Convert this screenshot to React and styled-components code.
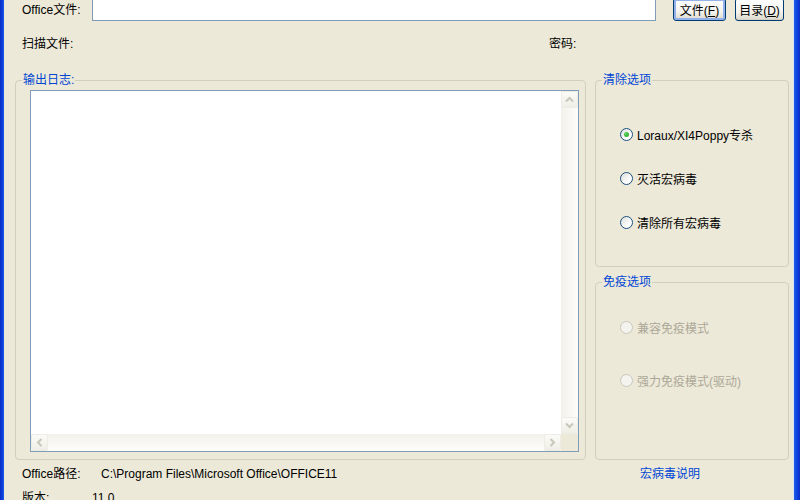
import React from 'react';
import styled, { createGlobalStyle } from 'styled-components';

const GlobalStyle = createGlobalStyle`
  html, body {
    margin: 0;
    padding: 0;
    background: #ece9d8;
    overflow: hidden;
  }
  body {
    font-family: "Liberation Sans", "Noto Sans CJK SC", sans-serif;
    font-size: 12px;
    color: #000;
  }
`;

const Window = styled.div`
  display: flex;
  width: 800px;
  height: 500px;
  overflow: hidden;
`;

const LeftFrame = styled.div`
  width: 4px;
  flex-shrink: 0;
  background: linear-gradient(to right, #0a2fc4, #0b3ad9 50%, #1c5ce8);
`;

const RightFrame = styled.div`
  width: 8px;
  flex-shrink: 0;
  background: linear-gradient(to right, #d9e3f5 0, #d9e3f5 1px, #1d5fe6 1px, #0b3ad9 5px, #062ab8);
`;

const Client = styled.div`
  flex: 1;
  display: flex;
  flex-direction: column;
  background: #ece9d8;
  padding: 0 4px 0 11px;
`;

const Row = styled.div`
  display: flex;
  align-items: center;
  flex-shrink: 0;
  height: ${p => p.h || 16}px;
  margin-top: ${p => p.mt || 0}px;
  padding-left: 7px;
`;

const Label = styled.span`
  width: ${p => (p.w ? `${p.w}px` : 'auto')};
  flex-shrink: 0;
  white-space: nowrap;
  line-height: 16px;
  color: ${p => (p.link ? '#0046d5' : '#000')};
`;

const TextInput = styled.div`
  width: 564px;
  height: 100%;
  box-sizing: border-box;
  background: #fff;
  border: 1px solid #7f9db9;
`;

const Button = styled.button`
  height: 100%;
  width: ${p => p.w}px;
  margin-left: ${p => p.ml}px;
  box-sizing: border-box;
  padding: 0 0 2px;
  font: inherit;
  color: #000;
  border: 1px solid #003c74;
  border-radius: 3px;
  background: linear-gradient(to bottom, #fff, #f4f3ee 60%, #dcd9cb);
  box-shadow: ${p => (p.primary ? 'inset 0 0 0 2px #93b2ea' : 'inset 0 -1px 0 #d6d0c5')};
  display: flex;
  align-items: flex-end;
  justify-content: center;
`;

const Main = styled.div`
  display: flex;
  flex-shrink: 0;
  height: 387px;
  margin-top: 21px;
  gap: 9px;
`;

const Group = styled.fieldset`
  margin: 0;
  box-sizing: border-box;
  width: ${p => p.w}px;
  height: ${p => p.h}px;
  border: 1px solid #d0d0bf;
  border-radius: 4px;
  padding: ${p => p.pad};
  min-width: 0;
`;

const Legend = styled.legend`
  padding: 0 1px;
  color: #0046d5;
  line-height: 14px;
`;

const Column = styled.div`
  display: flex;
  flex-direction: column;
  gap: 8px;
`;

const LogBox = styled.div`
  margin-left: 8px;
  height: 362px;
  box-sizing: border-box;
  border: 1px solid #7f9db9;
  display: grid;
  grid-template-columns: 1fr 17px;
  grid-template-rows: 1fr 17px;
  background: #fff;
`;

const LogText = styled.div`
  background: #fff;
`;

const ScrollBar = styled.div`
  display: flex;
  flex-direction: ${p => (p.vertical ? 'column' : 'row')};
  background: ${p =>
    p.vertical
      ? 'linear-gradient(to right, #f3f1ea, #fdfdfb)'
      : 'linear-gradient(to bottom, #f3f1ea, #fdfdfb)'};
`;

const Track = styled.div`
  flex: 1;
`;

const ArrowButton = styled.div`
  width: 17px;
  height: 17px;
  box-sizing: border-box;
  border: 1px solid #eeede5;
  border-radius: 2px;
  background: linear-gradient(to bottom, #fbfbf8, #efeee6);
  display: flex;
  align-items: center;
  justify-content: center;
`;

const Corner = styled.div`
  background: #ece9d8;
`;

const RadioList = styled.div`
  display: flex;
  flex-direction: column;
  gap: ${p => p.gap}px;
  margin-top: ${p => p.mt}px;
  margin-left: 18px;
`;

const RadioRow = styled.label`
  display: flex;
  align-items: center;
  height: 20px;
  gap: 4px;
  color: ${p => (p.disabled ? '#aca899' : '#000')};
`;

const RadioCircle = styled.span`
  width: 13px;
  height: 13px;
  box-sizing: border-box;
  border-radius: 50%;
  border: 1px solid ${p => (p.disabled ? '#cac8bb' : '#1c5180')};
  background: ${p =>
    p.disabled ? '#f4f3ee' : 'linear-gradient(135deg, #dcdcd7, #fff 70%)'};
  display: flex;
  align-items: center;
  justify-content: center;
  flex-shrink: 0;

  &::after {
    content: '';
    display: ${p => (p.checked ? 'block' : 'none')};
    width: 5px;
    height: 5px;
    border-radius: 50%;
    background: radial-gradient(circle at 35% 35%, #5fd35f, #21a121);
  }
`;

const Chevron = ({ dir }) => {
  const rot = { up: 0, down: 180, left: -90, right: 90 }[dir];
  return (
    <svg width="9" height="9" viewBox="0 0 9 9" style={{ transform: `rotate(${rot}deg)` }}>
      <path d="M1 6.5 L4.5 3 L8 6.5" fill="none" stroke="#c9c7ba" strokeWidth="2" />
    </svg>
  );
};

const Radio = ({ label, checked, disabled }) => (
  <RadioRow disabled={disabled}>
    <RadioCircle checked={checked} disabled={disabled} />
    {label}
  </RadioRow>
);

const App = () => (
  <>
    <GlobalStyle />
    <Window>
      <LeftFrame />
      <Client>
        <Row h={23} mt={-2}>
          <Label w={70}>Office文件:</Label>
          <TextInput />
          <Button primary w={53} ml={17}>文件(<u>F</u>)</Button>
          <Button w={49} ml={9}>目录(<u>D</u>)</Button>
        </Row>
        <Row mt={15}>
          <Label w={527}>扫描文件:</Label>
          <Label>密码:</Label>
        </Row>
        <Main>
          <Group w={571} h={387} pad="3px 6px 7px 6px">
            <Legend>输出日志:</Legend>
            <LogBox>
              <LogText />
              <ScrollBar vertical>
                <ArrowButton><Chevron dir="up" /></ArrowButton>
                <Track />
                <ArrowButton><Chevron dir="down" /></ArrowButton>
              </ScrollBar>
              <ScrollBar>
                <ArrowButton><Chevron dir="left" /></ArrowButton>
                <Track />
                <ArrowButton><Chevron dir="right" /></ArrowButton>
              </ScrollBar>
              <Corner />
            </LogBox>
          </Group>
          <Column>
            <Group w={194} h={194} pad="0 6px 0 6px">
              <Legend>清除选项</Legend>
              <RadioList gap={24} mt={37}>
                <Radio label="Loraux/XI4Poppy专杀" checked />
                <Radio label="灭活宏病毒" />
                <Radio label="清除所有宏病毒" />
              </RadioList>
            </Group>
            <Group w={194} h={185} pad="0 6px 0 6px">
              <Legend>免疫选项</Legend>
              <RadioList gap={33} mt={28}>
                <Radio label="兼容免疫模式" disabled />
                <Radio label="强力免疫模式(驱动)" disabled />
              </RadioList>
            </Group>
          </Column>
        </Main>
        <Row mt={6}>
          <Label w={79}>Office路径:</Label>
          <Label w={539}>C:\Program Files\Microsoft Office\OFFICE11</Label>
          <Label link>宏病毒说明</Label>
        </Row>
        <Row mt={8}>
          <Label w={70}>版本:</Label>
          <Label>11.0</Label>
        </Row>
      </Client>
      <RightFrame />
    </Window>
  </>
);

export default App;
